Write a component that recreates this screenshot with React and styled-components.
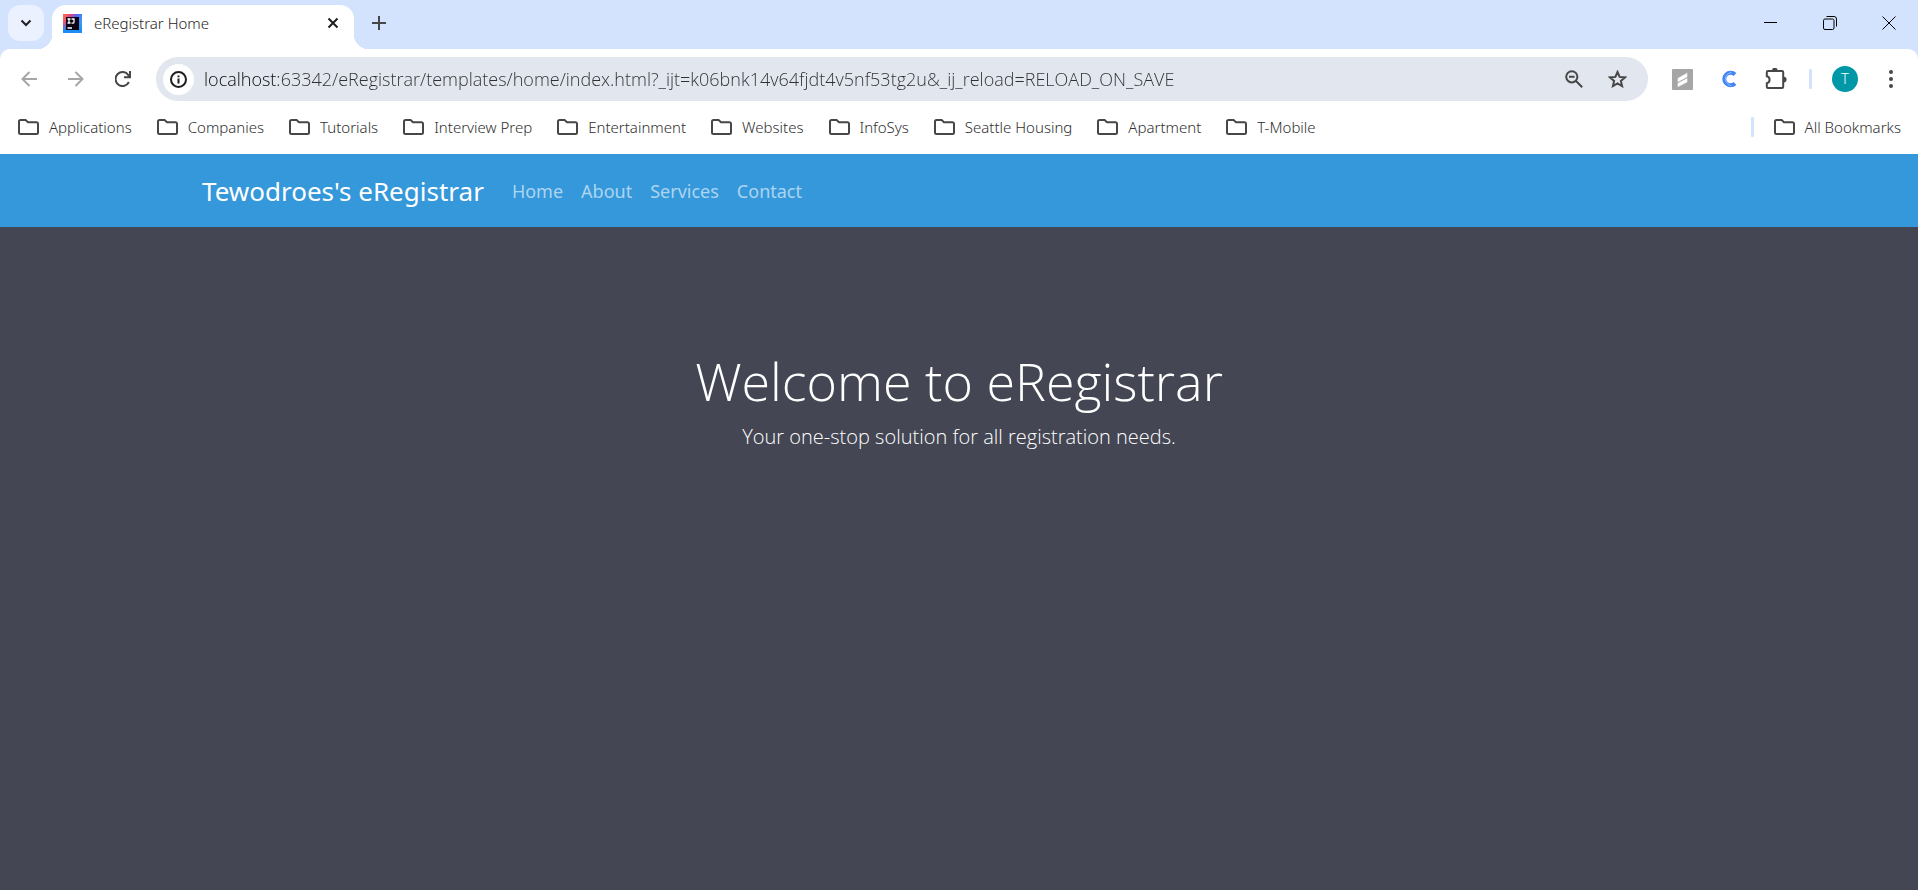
import React from "react";
import styled, { createGlobalStyle } from "styled-components";

const colors = {
  frame: "#d3e3fd",
  frameLight: "#ebf1fe",
  field: "#e1e6ef",
  ink: "#1f1f1f",
  inkDark: "#0a0a0a",
  text: "#474747",
  textDark: "#303030",
  muted: "#a6a6a6",
  navbar: "#3498db",
  page: "#444653",
};

const uiFont = `"Noto Sans", "Open Sans", sans-serif`;
const lightFont = `"Open Sans", "Noto Sans", sans-serif`;

const GlobalStyle = createGlobalStyle`
  *, *::before, *::after { box-sizing: border-box; }
  body { margin: 0; font-family: ${uiFont}; font-weight: 300; }
  h1, p, ul { margin: 0; padding: 0; }
  button { font: inherit; color: inherit; }
  svg { display: block; flex: none; }
`;

const Window = styled.div`
  display: flex;
  flex-direction: column;
  min-height: 100vh;
  background: ${colors.frame};
`;

const TabStrip = styled.header`
  display: flex;
  align-items: flex-end;
  height: 49px;
  padding-left: 8px;
`;

const IconButton = styled.button`
  display: flex;
  flex: none;
  align-items: center;
  justify-content: center;
  width: ${(p) => p.$size || 34}px;
  height: ${(p) => p.$size || 34}px;
  padding: 0;
  border: 0;
  border-radius: ${(p) => (p.$square ? "12px" : "50%")};
  background: ${(p) => p.$fill || "transparent"};
  color: ${(p) => p.$color || colors.text};
`;

const TabSearch = styled(IconButton)`
  margin: 0 8px 8px 0;
`;

const NewTab = styled(IconButton)`
  margin: 0 0 9px 8px;
`;

const Tab = styled.div`
  position: relative;
  display: flex;
  align-items: center;
  gap: 12px;
  width: 302px;
  height: 44px;
  padding: 0 8px 8px 11px;
  border-radius: 14px 14px 0 0;
  background: #fff;
  color: ${colors.ink};
  font-size: 15px;
  line-height: 20px;

  &::before,
  &::after {
    content: "";
    position: absolute;
    bottom: 0;
    width: 14px;
    height: 14px;
  }
  &::before {
    right: 100%;
    background: radial-gradient(circle at 0 0, transparent 14px, #fff 14px);
  }
  &::after {
    left: 100%;
    background: radial-gradient(circle at 100% 0, transparent 14px, #fff 14px);
  }
`;

const TabTitle = styled.span`
  flex: 1;
`;

const WindowControls = styled.div`
  display: flex;
  align-self: flex-start;
  margin-left: auto;
`;

const WindowButton = styled.button`
  display: flex;
  align-items: center;
  justify-content: center;
  width: 59px;
  height: 45px;
  padding: 0;
  border: 0;
  background: transparent;
  color: #000;
`;

const Chrome = styled.div`
  border-radius: 10px 10px 0 0;
  background: #fff;
`;

const Toolbar = styled.div`
  display: flex;
  align-items: center;
  height: 60px;
  padding: 0 10px 0 12px;
`;

const ButtonGroup = styled.div`
  display: flex;
  align-items: center;
  gap: 13px;
`;

const Omnibox = styled.form`
  display: flex;
  flex: 1;
  align-items: center;
  height: 44px;
  margin: 0 17px 0 16px;
  padding: 0 16px 0 7px;
  border-radius: 22px;
  background: ${colors.field};
`;

const Address = styled.input`
  flex: 1;
  min-width: 0;
  height: 30px;
  margin: 0 10px;
  padding: 0;
  border: 0;
  outline: 0;
  color: ${colors.textDark};
  background: linear-gradient(90deg, ${colors.inkDark} 74px, ${colors.textDark} 74px);
  background-clip: text;
  -webkit-text-fill-color: transparent;
  font-family: ${lightFont};
  font-size: 18px;
  font-weight: 300;
`;

const Divider = styled.span`
  flex: none;
  width: 3px;
  height: 20px;
  margin: 0 20px 0 ${(p) => p.$before}px;
  border-radius: 1px;
  background: ${colors.frame};
`;

const Avatar = styled.button`
  width: 26px;
  height: 26px;
  margin-right: 16px;
  padding: 0;
  border: 0;
  border-radius: 50%;
  background: #0097a7;
  color: #fff;
  font-family: Roboto, sans-serif;
  font-size: 14px;
  line-height: 26px;
`;

const BookmarksBar = styled.nav`
  display: flex;
  align-items: center;
  height: 45px;
  padding: 0 17px 10px 18px;
`;

const BookmarkList = styled.ul`
  display: flex;
  flex: 1;
  gap: 25px;
  list-style: none;
`;

const Bookmark = styled.button`
  display: flex;
  align-items: center;
  gap: 10px;
  padding: 0;
  border: 0;
  background: transparent;
  color: ${colors.textDark};
  font-size: 15px;
  line-height: 20px;
  white-space: nowrap;

  svg {
    color: ${colors.text};
  }
`;

const Page = styled.div`
  display: flex;
  flex: 1;
  flex-direction: column;
  background: ${colors.page};
`;

const Navbar = styled.nav`
  padding: 0 24px;
  background: ${colors.navbar};
`;

const Container = styled.div`
  display: flex;
  align-items: center;
  gap: 28px;
  max-width: 1514px;
  min-height: 73px;
  margin: 0 auto;
`;

const Brand = styled.a`
  color: #fff;
  font-size: 26px;
  font-weight: 400;
  line-height: 36px;
  text-decoration: none;
`;

const NavLinks = styled.ul`
  display: flex;
  gap: 18px;
  list-style: none;
`;

const NavLink = styled.a`
  color: rgba(255, 255, 255, 0.6);
  font-size: 18px;
  font-weight: 400;
  line-height: 28px;
  text-decoration: none;
`;

const Hero = styled.main`
  padding: 120px 16px;
  color: #fff;
  text-align: center;
`;

const HeroTitle = styled.h1`
  margin-bottom: 8px;
  font-family: ${lightFont};
  font-size: 52px;
  font-weight: 300;
  line-height: 68px;
`;

const HeroText = styled.p`
  font-family: ${lightFont};
  font-size: 20px;
  line-height: 28px;
`;

const Stroke = ({ w, h = w, width = 2, children }) => (
  <svg
    width={w}
    height={h}
    viewBox={`0 0 ${w} ${h}`}
    fill="none"
    stroke="currentColor"
    strokeWidth={width}
    aria-hidden="true"
  >
    {children}
  </svg>
);

const FolderIcon = () => (
  <Stroke w={21} h={16}>
    <path d="M2.5 1H7.6L10 3.2H18.5A1.5 1.5 0 0 1 20 4.7V13.5A1.5 1.5 0 0 1 18.500 15H2.500A1.5 1.5 0 0 1 1 13.500V2.500A1.5 1.5 0 0 1 2.500 1Z" />
  </Stroke>
);

const Favicon = () => (
  <svg width="19" height="19" viewBox="0 0 19 19" aria-hidden="true">
    <defs>
      <linearGradient id="ij-edge" x1="0" y1="0.2" x2="1" y2="0.6">
        <stop offset="0" stopColor="#fe6a4b" />
        <stop offset="0.3" stopColor="#e0408f" />
        <stop offset="0.6" stopColor="#4b6cf5" />
        <stop offset="1" stopColor="#3aa5ff" />
      </linearGradient>
      <linearGradient id="ij-foot" x1="0" y1="0" x2="0" y2="1">
        <stop offset="0.4" stopColor="#1c8df5" stopOpacity="0" />
        <stop offset="0.85" stopColor="#1c8df5" />
      </linearGradient>
    </defs>
    <rect width="19" height="19" fill="url(#ij-edge)" />
    <rect width="19" height="19" fill="url(#ij-foot)" />
    <rect x="3" y="3" width="13" height="13" fill="#0b0414" />
    <path
      d="M4.500 5H7.500M6 5V9M4.500 9H7.500M8.500 5H11V8Q11 9.200 9.800 9.200H8.500M4.500 14H9"
      fill="none"
      stroke="#fff"
      strokeWidth="1.300"
    />
  </svg>
);

const BlockExtensionIcon = () => (
  <svg width="21" height="21" viewBox="0 0 21 21" aria-hidden="true">
    <rect width="21" height="21" rx="1" fill="#a6a6a6" />
    <path
      d="M5.500 9 15.500 3.600V8.200L5.500 13.600ZM5.500 14 15.500 8.700V13.200L5.500 18.400Z"
      fill="#fff"
      stroke="#a6a6a6"
      strokeWidth="0.500"
    />
  </svg>
);

const RingExtensionIcon = () => (
  <svg width="16" height="18" viewBox="0 0 16 18" fill="none" aria-hidden="true">
    <path d="M14 4.500A6.300 6.300 0 1 0 14 13.500" stroke="#4285f4" strokeWidth="4" />
    <path d="M10.500 2.500A6.500 6.500 0 0 0 4.500 9.200Q5 14 10.500 16" stroke="#a9caff" strokeWidth="0.800" />
  </svg>
);

const PuzzleIcon = () => (
  <svg width="22" height="22" viewBox="0 0 22 22" fill="none" aria-hidden="true">
    <path
      d="M3 3H17A1.200 1.200 0 0 1 18.200 4.200V18.800A1.200 1.200 0 0 1 17 20H3A1.200 1.200 0 0 1 1.800 18.800V15.200A3.600 3.600 0 0 0 1.800 8.200V4.200A1.200 1.200 0 0 1 3 3Z"
      stroke={colors.text}
      strokeWidth="2"
    />
    <path d="M7 2.500A2.800 2.800 0 0 1 12.600 2.500ZM18.800 8.800A2.800 2.800 0 0 1 18.800 14.400Z" fill={colors.text} />
  </svg>
);

const bookmarks = [
  "Applications",
  "Companies",
  "Tutorials",
  "Interview Prep",
  "Entertainment",
  "Websites",
  "InfoSys",
  "Seattle Housing",
  "Apartment",
  "T-Mobile",
];

const navLinks = ["Home", "About", "Services", "Contact"];

const address =
  "localhost:63342/eRegistrar/templates/home/index.html?_ijt=k06bnk14v64fjdt4v5nf53tg2u&_ij_reload=RELOAD_ON_SAVE";

function BrowserTabs() {
  return (
    <TabStrip>
      <TabSearch $size={36} $square $fill={colors.frameLight} $color={colors.ink} aria-label="Search tabs">
        <Stroke w={12} h={8}>
          <path d="M1.500 1.500 6 6 10.500 1.500" />
        </Stroke>
      </TabSearch>
      <Tab>
        <Favicon />
        <TabTitle>eRegistrar Home</TabTitle>
        <IconButton $size={26} $color={colors.ink} aria-label="Close tab">
          <Stroke w={12}>
            <path d="M1.500 1.500 10.500 10.500M10.500 1.500 1.500 10.500" />
          </Stroke>
        </IconButton>
      </Tab>
      <NewTab aria-label="New tab">
        <Stroke w={14}>
          <path d="M7 0V14M0 7H14" />
        </Stroke>
      </NewTab>
      <WindowControls>
        <WindowButton aria-label="Minimize">
          <Stroke w={13} h={1} width={1}>
            <path d="M0 .5H13" />
          </Stroke>
        </WindowButton>
        <WindowButton aria-label="Restore">
          <Stroke w={14} width={1}>
            <rect x="0.500" y="3" width="10.500" height="10.500" rx="1.500" />
            <path d="M3.500 .5H11A2.500 2.500 0 0 1 13.500 3V10.500" />
          </Stroke>
        </WindowButton>
        <WindowButton aria-label="Close">
          <Stroke w={14} width={1}>
            <path d="M.5 .5 13.500 13.500M13.500 .5 .5 13.500" />
          </Stroke>
        </WindowButton>
      </WindowControls>
    </TabStrip>
  );
}

function BrowserToolbar() {
  return (
    <Toolbar>
      <ButtonGroup>
        <IconButton $color={colors.muted} aria-label="Back">
          <Stroke w={16}>
            <path d="M16 8H1.500M8.500 1 1.500 8 8.500 15" />
          </Stroke>
        </IconButton>
        <IconButton $color={colors.muted} aria-label="Forward">
          <Stroke w={16}>
            <path d="M0 8H14.500M7.500 1 14.500 8 7.500 15" />
          </Stroke>
        </IconButton>
        <IconButton aria-label="Reload">
          <Stroke w={16}>
            <path d="M13.900 11A7 7 0 1 1 13.400 4.200L14.500 6M15 0V6.200H9" />
          </Stroke>
        </IconButton>
      </ButtonGroup>
      <Omnibox onSubmit={(e) => e.preventDefault()}>
        <IconButton type="button" $size={31} $fill="#fff" $color={colors.ink} aria-label="Site information">
          <Stroke w={17}>
            <circle cx="8.500" cy="8.500" r="7.500" />
            <path d="M8.500 7.500V12.500M8.500 4.500V6.200" />
          </Stroke>
        </IconButton>
        <Address type="text" aria-label="Address" defaultValue={address} spellCheck={false} />
        <ButtonGroup>
          <IconButton type="button" $size={30} aria-label="Zoom">
            <Stroke w={18}>
              <circle cx="6.800" cy="6.800" r="5.600" />
              <path d="M10.800 10.800 17.200 17.200M4 6.800H9.600" />
            </Stroke>
          </IconButton>
          <IconButton type="button" $size={30} aria-label="Bookmark this page">
            <Stroke w={19} h={18}>
              <path d="M9.500 2 11.600 6.900 17 7.400 12.900 10.900 14.100 16.100 9.500 13.400 4.900 16.100 6.100 10.900 2 7.400 7.400 6.900Z" />
            </Stroke>
          </IconButton>
        </ButtonGroup>
      </Omnibox>
      <ButtonGroup>
        <IconButton aria-label="Block extension">
          <BlockExtensionIcon />
        </IconButton>
        <IconButton aria-label="Ring extension">
          <RingExtensionIcon />
        </IconButton>
        <IconButton aria-label="Extensions">
          <PuzzleIcon />
        </IconButton>
      </ButtonGroup>
      <Divider $before={16} />
      <Avatar aria-label="Profile T">T</Avatar>
      <IconButton aria-label="Menu">
        <svg width="4" height="18" viewBox="0 0 4 18" fill="currentColor" aria-hidden="true">
          <circle cx="2" cy="2" r="2" />
          <circle cx="2" cy="9" r="2" />
          <circle cx="2" cy="16" r="2" />
        </svg>
      </IconButton>
    </Toolbar>
  );
}

export default function App() {
  return (
    <Window>
      <GlobalStyle />
      <BrowserTabs />
      <Chrome>
        <BrowserToolbar />
        <BookmarksBar aria-label="Bookmarks">
          <BookmarkList>
            {bookmarks.map((name) => (
              <li key={name}>
                <Bookmark>
                  <FolderIcon />
                  {name}
                </Bookmark>
              </li>
            ))}
          </BookmarkList>
          <Divider $before={20} />
          <Bookmark>
            <FolderIcon />
            All Bookmarks
          </Bookmark>
        </BookmarksBar>
      </Chrome>
      <Page>
        <Navbar aria-label="Main">
          <Container>
            <Brand href="#">Tewodroes's eRegistrar</Brand>
            <NavLinks>
              {navLinks.map((name) => (
                <li key={name}>
                  <NavLink href={`#${name.toLowerCase()}`}>{name}</NavLink>
                </li>
              ))}
            </NavLinks>
          </Container>
        </Navbar>
        <Hero>
          <HeroTitle>Welcome to eRegistrar</HeroTitle>
          <HeroText>Your one-stop solution for all registration needs.</HeroText>
        </Hero>
      </Page>
    </Window>
  );
}
